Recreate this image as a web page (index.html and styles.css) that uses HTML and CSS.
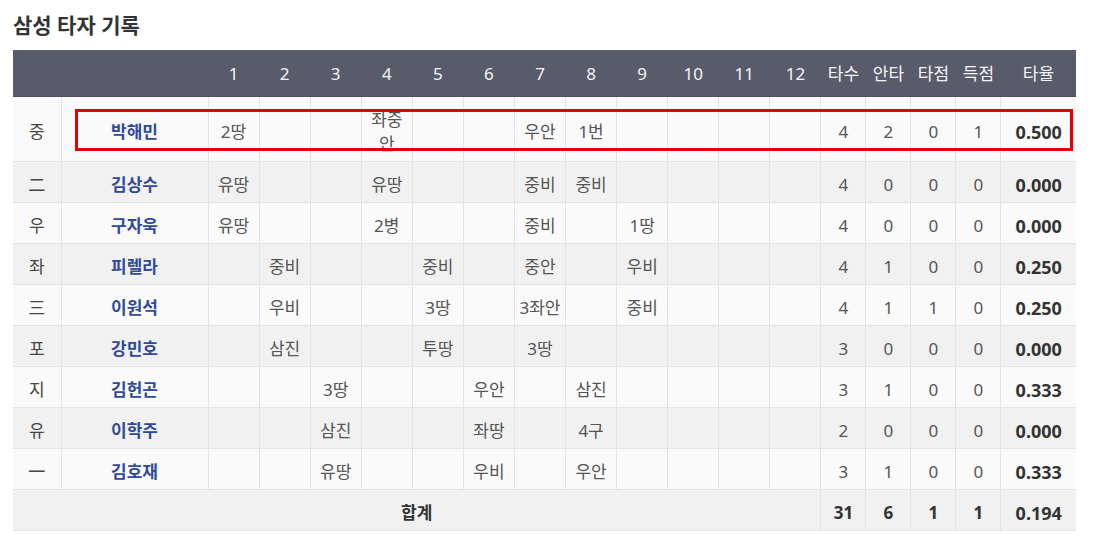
FILE: index.html
```html
<!DOCTYPE html>
<html lang="ko">
<head>
<meta charset="utf-8">
<title>삼성 타자 기록</title>
<link rel="stylesheet" href="styles.css">
</head>
<body>
<div class="page">
  <h2 class="title">삼성 타자 기록</h2>
  <div class="table-wrap">
    <table class="box">
      <colgroup>
        <col class="c-pos"><col class="c-name">
        <col class="c-inn"><col class="c-inn"><col class="c-inn"><col class="c-inn"><col class="c-inn"><col class="c-inn">
        <col class="c-inn"><col class="c-inn"><col class="c-inn"><col class="c-inn"><col class="c-inn"><col class="c-inn">
        <col class="c-st"><col class="c-st"><col class="c-st"><col class="c-st"><col class="c-avg">
      </colgroup>
      <thead>
        <tr>
          <th></th><th></th>
          <th>1</th><th>2</th><th>3</th><th>4</th><th>5</th><th>6</th><th>7</th><th>8</th><th>9</th><th>10</th><th>11</th><th>12</th>
          <th>타수</th><th>안타</th><th>타점</th><th>득점</th><th>타율</th>
        </tr>
      </thead>
      <tbody>
        <tr><td class="pos">중</td><td class="name">박해민</td><td>2땅</td><td></td><td></td><td>좌중안</td><td></td><td></td><td>우안</td><td>1번</td><td></td><td></td><td></td><td></td><td>4</td><td>2</td><td>0</td><td>1</td><td class="avg">0.500</td></tr>
        <tr><td class="pos">二</td><td class="name">김상수</td><td>유땅</td><td></td><td></td><td>유땅</td><td></td><td></td><td>중비</td><td>중비</td><td></td><td></td><td></td><td></td><td>4</td><td>0</td><td>0</td><td>0</td><td class="avg">0.000</td></tr>
        <tr><td class="pos">우</td><td class="name">구자욱</td><td>유땅</td><td></td><td></td><td>2병</td><td></td><td></td><td>중비</td><td></td><td>1땅</td><td></td><td></td><td></td><td>4</td><td>0</td><td>0</td><td>0</td><td class="avg">0.000</td></tr>
        <tr><td class="pos">좌</td><td class="name">피렐라</td><td></td><td>중비</td><td></td><td></td><td>중비</td><td></td><td>중안</td><td></td><td>우비</td><td></td><td></td><td></td><td>4</td><td>1</td><td>0</td><td>0</td><td class="avg">0.250</td></tr>
        <tr><td class="pos">三</td><td class="name">이원석</td><td></td><td>우비</td><td></td><td></td><td>3땅</td><td></td><td>3좌안</td><td></td><td>중비</td><td></td><td></td><td></td><td>4</td><td>1</td><td>1</td><td>0</td><td class="avg">0.250</td></tr>
        <tr><td class="pos">포</td><td class="name">강민호</td><td></td><td>삼진</td><td></td><td></td><td>투땅</td><td></td><td>3땅</td><td></td><td></td><td></td><td></td><td></td><td>3</td><td>0</td><td>0</td><td>0</td><td class="avg">0.000</td></tr>
        <tr><td class="pos">지</td><td class="name">김헌곤</td><td></td><td></td><td>3땅</td><td></td><td></td><td>우안</td><td></td><td>삼진</td><td></td><td></td><td></td><td></td><td>3</td><td>1</td><td>0</td><td>0</td><td class="avg">0.333</td></tr>
        <tr><td class="pos">유</td><td class="name">이학주</td><td></td><td></td><td>삼진</td><td></td><td></td><td>좌땅</td><td></td><td>4구</td><td></td><td></td><td></td><td></td><td>2</td><td>0</td><td>0</td><td>0</td><td class="avg">0.000</td></tr>
        <tr><td class="pos">一</td><td class="name">김호재</td><td></td><td></td><td>유땅</td><td></td><td></td><td>우비</td><td></td><td>우안</td><td></td><td></td><td></td><td></td><td>3</td><td>1</td><td>0</td><td>0</td><td class="avg">0.333</td></tr>
      </tbody>
      <tfoot>
        <tr><td colspan="14" class="sum-label">합계</td><td>31</td><td>6</td><td>1</td><td>1</td><td class="avg">0.194</td></tr>
      </tfoot>
    </table>
    <div class="highlight"></div>
  </div>
</div>
</body>
</html>
```

FILE: styles.css
```css
html, body {
  margin: 0;
  padding: 0;
  background: #ffffff;
}

body {
  font-family: "Noto Sans", "Noto Sans CJK KR", sans-serif;
  color: #555555;
}

.page {
  padding: 0 23px 0 13px;
}

.title {
  margin: 0;
  padding: 10px 0 10px;
  font-size: 21px;
  line-height: 30px;
  font-weight: 700;
  color: #333333;
}

.table-wrap {
  position: relative;
  width: 1063px;
}

.box {
  width: 1063px;
  table-layout: fixed;
  border-collapse: collapse;
  font-size: 17px;
  line-height: 24px;
}

.c-pos { width: 48px; }
.c-name { width: 147px; }
.c-inn { width: 51.08px; }
.c-st { width: 45px; }
.c-avg { width: 75px; }

.box thead th {
  background: #585c6a;
  color: #f4f4f6;
  font-weight: 400;
  padding: 12px 0 10px;
  border-bottom: 1px solid #4a4e5a;
  text-align: center;
  white-space: nowrap;
}

.box td {
  padding: 11px 4px 5px;
  text-align: center;
  border: 1px solid #e4e4e4;
  border-top: 0;
  color: #555555;
}

.box td:first-child { border-left: 0; }
.box td:last-child { border-right: 0; }

.box tbody tr:nth-child(odd) td { background: #fafafa; }
.box tbody tr:nth-child(even) td { background: #f1f1f1; }

.box td.pos { color: #444444; }

.box td.name {
  color: #2f4a9a;
  font-weight: 700;
}

.box td.avg {
  color: #333333;
  font-weight: 700;
  font-size: 18px;
}

.box tfoot td {
  background: #f1f1f1;
  color: #333333;
  font-weight: 700;
}

.box tfoot td.sum-label {
  border-left: 0;
}

.highlight {
  position: absolute;
  left: 62px;
  top: 59px;
  width: 998px;
  height: 42px;
  box-sizing: border-box;
  border: 3px solid #e60000;
  pointer-events: none;
}
```
